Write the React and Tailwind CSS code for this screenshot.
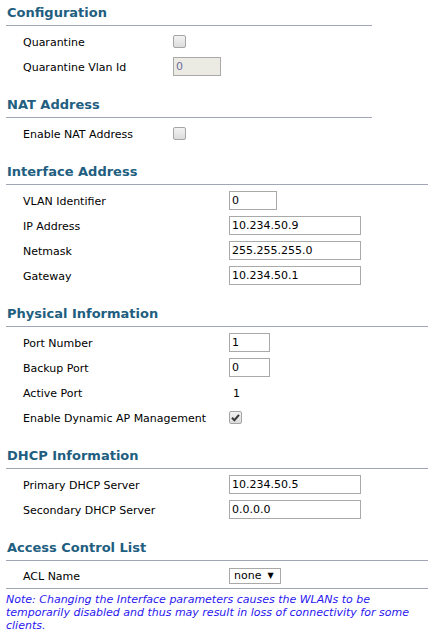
const FONT = { fontFamily: '"DejaVu Sans", Verdana, sans-serif' }

function Heading({ children, wide }) {
  return (
    <div className={`h-[26px] border-b border-[#a0a6b6] flex items-center pl-px ${wide ? 'w-[422px]' : 'w-[366px]'}`}>
      <h2 className="text-[13px] font-bold text-[#215e80] leading-none">{children}</h2>
    </div>
  )
}

function Row({ label, col, children, last }) {
  return (
    <div className={`h-[25px] flex items-center ${last ? 'border-b border-[#a0a6b6] w-[422px]' : ''}`}>
      <span className={`pl-[17px] pt-[3px] shrink-0 text-[11px] text-black ${col === 'narrow' ? 'w-[167px]' : 'w-[223px]'}`}>{label}</span>
      {children}
    </div>
  )
}

function TextBox({ value, width, disabled }) {
  return (
    <div
      className={`h-[19px] border border-[#a9a9a9] flex items-center pl-[2px] pt-px text-[11px] ${width} ${
        disabled ? 'bg-[#ebebe4] text-[#6d6d9a]' : 'bg-white text-black'
      }`}
    >
      {value}
    </div>
  )
}

function Check({ checked }) {
  return (
    <div className="w-[13px] h-[13px] rounded-[2px] border border-[#a5a5a5] bg-gradient-to-b from-[#f2f2f2] to-[#dcdcdc] flex items-center justify-center">
      {checked && (
        <svg width="9" height="9" viewBox="0 0 9 9">
          <path d="M1 4.8 L3.4 7.2 L8 1.8" fill="none" stroke="#3a3a3a" strokeWidth="2" />
        </svg>
      )}
    </div>
  )
}

export default function App() {
  return (
    <div className="bg-white w-[447px] h-[638px] pl-[6px] overflow-hidden" style={FONT}>
      {/* Configuration */}
      <Heading>Configuration</Heading>
      <div className="pt-[3px]">
        <Row label="Quarantine" col="narrow"><Check /></Row>
        <Row label="Quarantine Vlan Id" col="narrow"><TextBox value="0" width="w-[48px]" disabled /></Row>
      </div>

      {/* NAT */}
      <div className="mt-[13px]">
        <Heading>NAT Address</Heading>
        <div className="pt-[3px]">
          <Row label="Enable NAT Address" col="narrow"><Check /></Row>
        </div>
      </div>

      {/* Interface */}
      <div className="mt-[13px]">
        <Heading wide>Interface Address</Heading>
        <div className="pt-[3px]">
          <Row label="VLAN Identifier"><TextBox value="0" width="w-[48px]" /></Row>
          <Row label="IP Address"><TextBox value="10.234.50.9" width="w-[132px]" /></Row>
          <Row label="Netmask"><TextBox value="255.255.255.0" width="w-[132px]" /></Row>
          <Row label="Gateway"><TextBox value="10.234.50.1" width="w-[132px]" /></Row>
        </div>
      </div>

      {/* Physical */}
      <div className="mt-[13px]">
        <Heading wide>Physical Information</Heading>
        <div className="pt-[3px]">
          <Row label="Port Number"><TextBox value="1" width="w-[41px]" /></Row>
          <Row label="Backup Port"><TextBox value="0" width="w-[41px]" /></Row>
          <Row label="Active Port"><span className="pl-[4px] pt-[3px] text-[11px]">1</span></Row>
          <Row label="Enable Dynamic AP Management"><Check checked /></Row>
        </div>
      </div>

      {/* DHCP */}
      <div className="mt-[13px]">
        <Heading wide>DHCP Information</Heading>
        <div className="pt-[3px]">
          <Row label="Primary DHCP Server"><TextBox value="10.234.50.5" width="w-[132px]" /></Row>
          <Row label="Secondary DHCP Server"><TextBox value="0.0.0.0" width="w-[132px]" /></Row>
        </div>
      </div>

      {/* ACL */}
      <div className="mt-[13px]">
        <Heading wide>Access Control List</Heading>
        <div className="pt-[3px]">
          <Row label="ACL Name" last>
            <div className="w-[52px] h-[16px] border border-[#a9a9a9] flex items-center pl-[4px] gap-[6px] text-[11px] text-black">
              none
              <span className="text-[8px] leading-none">▼</span>
            </div>
          </Row>
        </div>
      </div>

      <p className="mt-[4px] w-[420px] text-[11px] leading-[13px] italic text-[#2a16f0]">
        Note: Changing the Interface parameters causes the WLANs to be temporarily disabled and thus may result in loss of connectivity for some clients.
      </p>
    </div>
  )
}
